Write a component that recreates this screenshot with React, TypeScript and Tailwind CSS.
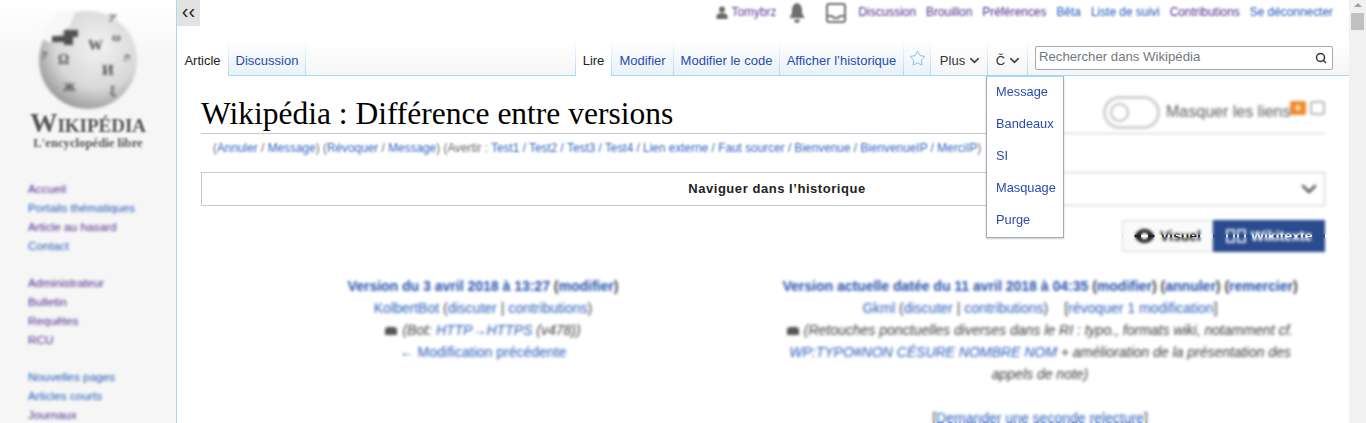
import { ChevronDown, Search, Star } from "lucide-react";

const navGroups = [
  [
    { label: "Accueil", seen: true },
    { label: "Portails thématiques", seen: false },
    { label: "Article au hasard", seen: true },
    { label: "Contact", seen: false },
  ],
  [
    { label: "Administrateur", seen: true },
    { label: "Bulletin", seen: true },
    { label: "Requêtes", seen: true },
    { label: "RCU", seen: true },
  ],
  [
    { label: "Nouvelles pages", seen: false },
    { label: "Articles courts", seen: false },
    { label: "Journaux", seen: true },
  ],
];

const personal = [
  { label: "Discussion", seen: true },
  { label: "Brouillon", seen: true },
  { label: "Préférences", seen: true },
  { label: "Bêta", seen: false },
  { label: "Liste de suivi", seen: false },
  { label: "Contributions", seen: true },
  { label: "Se déconnecter", seen: false },
];

function Globe() {
  return (
    <svg width="104" height="98" viewBox="0 0 104 98" className="blur-[1.4px]">
      <defs>
        <radialGradient id="globe" cx="0.6" cy="0.36" r="0.72">
          <stop offset="0" stopColor="#f2f2f2" />
          <stop offset="0.6" stopColor="#d8d8d8" />
          <stop offset="1" stopColor="#8e8e8e" />
        </radialGradient>
      </defs>
      <circle cx="52" cy="49" r="49" fill="url(#globe)" />
      <path d="M0 24 L22 0 L40 0 L34 14 L14 32 Z" fill="#f8f8f8" />
      <path d="M16 25 H28 V19 H42 V26 H37 V34 H28 V31 H16 Z" fill="#505050" />
      <g fontFamily="Liberation Serif, serif" fill="#4a4a4a" fontWeight="700">
        <text x="22" y="53" fontSize="14">Ω</text>
        <text x="52" y="39" fontSize="15">W</text>
        <text x="66" y="64" fontSize="15">И</text>
        <text x="27" y="80" fontSize="13">Ж</text>
        <text x="76" y="30" fontSize="12">ω</text>
        <text x="74" y="84" fontSize="12">ξ</text>
        <text x="88" y="50" fontSize="11">ת</text>
        <text x="72" y="10" fontSize="9">ア</text>
        <text x="6" y="47" fontSize="10">ק</text>
      </g>
    </svg>
  );
}

function Sidebar() {
  return (
    <aside className="w-[176px] shrink-0 h-[423px] overflow-hidden bg-linear-to-b from-white to-[#f6f6f6] to-[60px]">
      <div className="flex flex-col items-center pt-[11px]">
        <Globe />
        <div className="blur-[1.3px] text-center font-['Liberation_Serif',serif] text-[#555]">
          <div className="mt-[1px] h-[26px] text-[27.5px] leading-[26px] font-bold [font-variant:small-caps]">
            Wikipédia
          </div>
          <div className="h-[14px] text-[12.7px] leading-[14px] font-bold">
            L'encyclopédie libre
          </div>
        </div>
      </div>
      <nav className="mt-[30px] pl-[28px] flex flex-col gap-[18px] blur-[1.4px] text-[11.8px] leading-[19px]">
        {navGroups.map((group, i) => (
          <ul key={i}>
            {group.map((item) => (
              <li key={item.label} className={item.seen ? "text-[#4a2a8c]" : "text-[#1f56b8]"}>
                {item.label}
              </li>
            ))}
          </ul>
        ))}
      </nav>
    </aside>
  );
}

function PersonalBar() {
  return (
    <div className="h-[40px] flex items-start justify-between">
      <div className="w-[23px] h-[26px] bg-[#e2e2e2] flex items-center justify-center text-[20px] text-[#222] leading-none pb-[5px]">
        ‹‹
      </div>
      <div className="flex items-center h-[25px] pr-[16px] text-[11.9px] text-[#5a3696] blur-[1.3px]">
        <svg width="12" height="13" viewBox="0 0 12 13" fill="#6a6a6a" className="mr-[4px]">
          <circle cx="6" cy="3.5" r="3" />
          <path d="M0.5 13 V10 C0.5 8 3 7 6 7 C9 7 11.5 8 11.5 10 V13 Z" />
        </svg>
        <span className="w-[56px]">Tomybrz</span>
        <svg width="18" height="20" viewBox="0 0 18 20" fill="#6e6e6e" className="mr-[20px]">
          <path d="M9 0 C5 1 4 4 4 8 C4 11 3 13 1 15 H17 C15 13 14 11 14 8 C14 4 13 1 9 0 Z" />
          <path d="M6 16.5 H12 C12 18.5 10.5 20 9 20 C7.5 20 6 18.5 6 16.5 Z" />
        </svg>
        <svg width="20" height="20" viewBox="0 0 20 20" fill="none" stroke="#6e6e6e" strokeWidth="2" className="mr-[13px]">
          <rect x="1" y="1" width="18" height="18" rx="2" />
          <path d="M1 13 H6 L8 15 H12 L14 13 H19" />
        </svg>
        <div className="flex gap-[10px]">
          {personal.map((p) => (
            <span key={p.label} className={p.seen ? "text-[#4a2a8c]" : "text-[#1f56b8]"}>
              {p.label}
            </span>
          ))}
        </div>
      </div>
    </div>
  );
}

function Tab({ label, active, width, dark }: { label: React.ReactNode; active?: boolean; width: string; dark?: boolean }) {
  return (
    <>
      <div
        className={`${width} h-[36px] -mb-px flex items-center justify-center pt-[5px] ${
          active
            ? "bg-white text-[#222]"
            : dark
              ? "border-b border-[#a7d7f9] text-[#333]"
              : "border-b border-[#a7d7f9] bg-linear-to-b from-white to-[#e8f2f8] text-[#2a4bb0]"
        }`}
      >
        {label}
      </div>
      <div className="w-px h-[36px] -mb-px bg-linear-to-b from-white to-[#a7d7f9]" />
    </>
  );
}

function TabBar() {
  return (
    <div className="h-[36px] pr-[16px] flex items-start justify-between border-b border-[#a7d7f9] bg-linear-to-b from-white to-[#f6f6f6] text-[13px] leading-none">
      <div className="flex">
        <Tab label="Article" active width="w-[51px]" />
        <Tab label="Discussion" width="w-[76px]" />
      </div>
      <div className="flex">
        <div className="w-px h-[36px] -mb-px bg-linear-to-b from-white to-[#a7d7f9]" />
        <Tab label="Lire" active width="w-[35px]" />
        <Tab label="Modifier" width="w-[61px]" />
        <Tab label="Modifier le code" width="w-[105px]" />
        <Tab label="Afficher l’historique" width="w-[123px]" />
        <Tab label={<Star size={17} strokeWidth={1.3} className="text-[#7db9dc] -mt-[3px]" />} width="w-[26px]" />
        <Tab
          dark
          label={
            <span className="flex items-center gap-[2px] pl-[4px]">
              Plus <ChevronDown size={15} strokeWidth={2.6} className="text-[#444]" />
            </span>
          }
          width="w-[56px]"
        />
        <Tab
          dark
          label={
            <span className="flex items-center gap-[2px] pl-[3px]">
              Č <ChevronDown size={15} strokeWidth={2.6} className="text-[#444]" />
            </span>
          }
          width="w-[39px]"
        />
        <div className="ml-[7px] mt-[6px] w-[298px] h-[24px] border border-[#a2a9b1] rounded-[2px] bg-white flex items-center justify-between pl-[3px] pr-[5px] text-[#72777d]">
          <span className="-mt-[2px] text-[13.2px]">Rechercher dans Wikipédia</span>
          <Search size={12} strokeWidth={3} className="text-[#333]" />
        </div>
      </div>
    </div>
  );
}

function ToolsMenu() {
  return (
    <div className="absolute z-20 left-[809px] top-[76px] w-[78px] h-[162px] bg-white border border-[#a2a9b1] border-t-[#a7d7f9] shadow-[0_1px_2px_rgba(0,0,0,0.2)] pl-[9px] text-[12.8px] leading-[32px] text-[#2a4bb0]">
      <div className="-mt-[1px]">Message</div>
      <div>Bandeaux</div>
      <div>SI</div>
      <div>Masquage</div>
      <div>Purge</div>
    </div>
  );
}

function TitleRow() {
  return (
    <div className="h-[58px] flex items-start justify-between border-b border-[#c8ccd1]">
      <h1 className="mt-[20px] text-[31.5px] leading-[36px] font-['Liberation_Serif',serif] text-black">
        Wikipédia : Différence entre versions
      </h1>
      <div className="flex items-start mt-[20px]">
        <div className="w-[57px] h-[33px] rounded-full border-[3px] border-[#d0d0d0] bg-white flex items-center pl-[4px] mr-[6px]">
          <div className="w-[19px] h-[19px] rounded-full border-2 border-[#c0c0c0]" />
        </div>
        <span className="mt-[6px] text-[16px] leading-[20px] text-[#666] w-[124px] whitespace-nowrap">Masquer les liens</span>
        <div className="mt-[5px] w-[16px] h-[14px] rounded-[2px] bg-[#f08a30] mr-[4px] flex items-center justify-center text-[12px] leading-none text-white font-bold">
          +
        </div>
        <div className="mt-[5px] w-[15px] h-[14px] rounded-[2px] border-2 border-[#bbb]" />
      </div>
    </div>
  );
}

function DiffSide({ children }: { children: React.ReactNode }) {
  return <div className="w-[530px] text-center">{children}</div>;
}

function Minor() {
  return <span className="inline-block w-[12px] h-[8px] mr-[5px] rounded-t-[3px] bg-[#555] align-baseline" />;
}

function DiffHeader() {
  const blue = "text-[#2f63c0]";
  const note = "text-[#444]";
  return (
    <div className="mt-[23px] pl-[17px] flex gap-[27px] text-[14px] leading-[22px] text-[#444]">
      <DiffSide>
        <div className="font-bold">
          <span className="text-[#2a55b0]">Version du 3 avril 2018 à 13:27</span>{" "}
          (<span className="text-[#2a55b0]">modifier</span>)
        </div>
        <div className={blue}>
          KolbertBot <span className={note}>(</span>discuter <span className={note}>|</span> contributions<span className={note}>)</span>
        </div>
        <div className={`italic ${note}`}>
          <Minor />
          (Bot: <span className={blue}>HTTP→HTTPS</span> (v478))
        </div>
        <div className={blue}>← Modification précédente</div>
      </DiffSide>
      <DiffSide>
        <div className="font-bold">
          <span className="text-[#2a55b0]">Version actuelle datée du 11 avril 2018 à 04:35</span>{" "}
          (<span className="text-[#2a55b0]">modifier</span>) (<span className="text-[#2a55b0]">annuler</span>) (
          <span className="text-[#2a55b0]">remercier</span>)
        </div>
        <div className={blue}>
          Gkml <span className={note}>(</span>discuter <span className={note}>|</span> contributions<span className={note}>)</span>
          <span className={`${note} ml-[16px]`}>[</span>révoquer 1 modification<span className={note}>]</span>
        </div>
        <div className={`italic ${note}`}>
          <Minor />
          (Retouches ponctuelles diverses dans le RI : typo., formats wiki, notamment cf.{" "}
          <span className={blue}>WP:TYPO#NON CÉSURE NOMBRE NOM</span> + amélioration de la présentation des appels de note)
        </div>
        <div className={`mt-[22px] ${blue}`}>
          <span className={note}>[</span>Demander une seconde relecture<span className={note}>]</span>
        </div>
      </DiffSide>
    </div>
  );
}

function ModeSwitch() {
  return (
    <div className="mt-[14px] flex justify-end">
      <div className="flex h-[32px] rounded-[2px] text-[14px] font-bold">
        <div className="w-[91px] border border-[#d8d8d8] bg-[#fafafa] flex items-center justify-center gap-[5px] text-[#222]">
          <svg width="21" height="14" viewBox="0 0 21 14">
            <path d="M0 7 C4 1 7 0 10.5 0 C14 0 17 1 21 7 C17 13 14 14 10.5 14 C7 14 4 13 0 7 Z" fill="#222" />
            <circle cx="10.5" cy="7" r="3.5" fill="#fff" />
          </svg>
          Visuel
        </div>
        <div className="w-[112px] bg-[#2a4b8d] flex items-center justify-center gap-[5px] text-white">
          <svg width="20" height="14" viewBox="0 0 20 14" fill="none" stroke="#d8e0f0" strokeWidth="2">
            <path d="M1 1 H8 V13 H1 Z M12 1 H19 V13 H12 Z" />
          </svg>
          Wikitexte
        </div>
      </div>
    </div>
  );
}

function Content() {
  return (
    <div className="px-[24px] h-[347px] overflow-hidden bg-white">
      <TitleRow />
      <div className="mt-[6px] pl-[12px] h-[16px] text-[11.85px] leading-[16px] text-[#666] blur-[1.3px]">
        (<span className="text-[#2f63c0]">Annuler</span> / <span className="text-[#2f63c0]">Message</span>) (
        <span className="text-[#2f63c0]">Révoquer</span> / <span className="text-[#2f63c0]">Message</span>) (Avertir :{" "}
        <span className="text-[#2f63c0]">
          Test1 / Test2 / Test3 / Test4 / Lien externe / Faut sourcer / Bienvenue / BienvenueIP / MerciIP
        </span>
        )
      </div>
      <div className="mt-[16px] h-[34px] border border-[#c8ccd1] relative flex items-center justify-center pl-[28px] text-[13px] font-bold tracking-[0.55px] text-[#222]">
        Naviguer dans l’historique
        <ChevronDown size={24} strokeWidth={2.5} className="absolute right-[3px] text-[#555]" />
      </div>
      <ModeSwitch />
      <DiffHeader />
    </div>
  );
}

export default function App() {
  return (
    <div className="relative w-[1366px] h-[423px] overflow-hidden flex bg-white font-['Liberation_Sans',Arial,sans-serif]">
      <Sidebar />
      <main className="relative w-[1173px] shrink-0 border-l border-[#a7d7f9]">
        <PersonalBar />
        <TabBar />
        <Content />
        <ToolsMenu />
        {/* the blurred patches of the shot: right of the menu, and below the one sharp pixel row */}
        <div className="absolute z-10 left-[887px] top-[77px] w-[285px] h-[158px] backdrop-blur-[1.4px]" />
        <div className="absolute z-10 left-0 top-[237px] w-[1173px] h-[186px] backdrop-blur-[1.5px]" />
      </main>
      <div className="w-[17px] shrink-0 bg-[#f1f1f1] flex flex-col items-center pt-[3px]">
        <div className="w-0 h-0 border-x-[4px] border-x-transparent border-b-[4px] border-b-[#a0a0a0]" />
        <div className="mt-[6px] w-[13px] h-[17px] bg-[#c1c1c1]" />
      </div>
    </div>
  );
}
